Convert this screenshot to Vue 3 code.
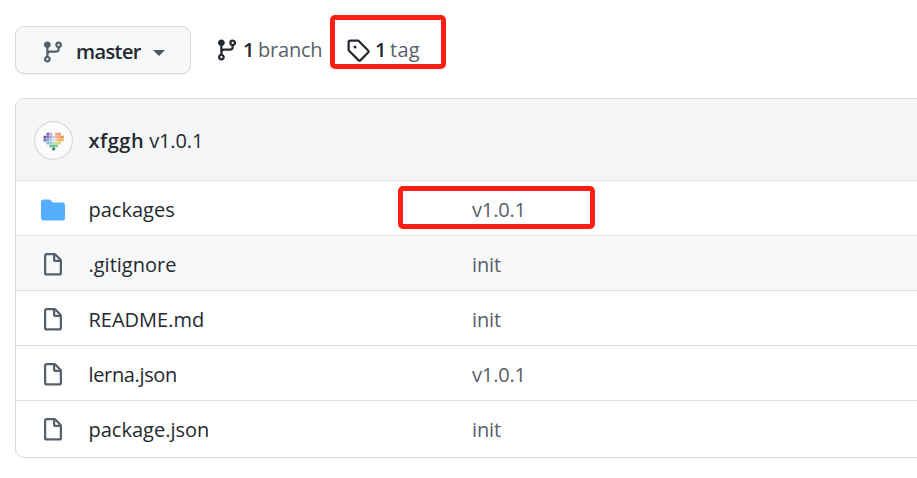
<script setup>
const branchPath = 'M11.75 2.5a.75.75 0 100 1.5.75.75 0 000-1.5zm-2.25.75a2.25 2.25 0 113 2.122V6A2.5 2.5 0 0110 8.5H6a1 1 0 00-1 1v1.128a2.251 2.251 0 11-1.5 0V5.372a2.25 2.25 0 111.5 0v1.836A2.492 2.492 0 016 7h4a1 1 0 001-1v-.628A2.25 2.25 0 019.5 3.25zM4.25 12a.75.75 0 100 1.5.75.75 0 000-1.5zM3.5 3.25a.75.75 0 111.5 0 .75.75 0 01-1.5 0z'
const tagPath = 'M2.5 7.775V2.75a.25.25 0 01.25-.25h5.025a.25.25 0 01.177.073l6.25 6.25a.25.25 0 010 .354l-5.025 5.025a.25.25 0 01-.354 0l-6.25-6.25a.25.25 0 01-.073-.177zm-1.5 0V2.75C1 1.784 1.784 1 2.75 1h5.025c.464 0 .91.184 1.238.513l6.25 6.25a1.75 1.75 0 010 2.474l-5.026 5.026a1.75 1.75 0 01-2.474 0l-6.25-6.25A1.75 1.75 0 011 7.775zM6 5a1 1 0 100 2 1 1 0 000-2z'
const filePath = 'M3.75 1.5a.25.25 0 00-.25.25v11.5c0 .138.112.25.25.25h8.5a.25.25 0 00.25-.25V6H9.75A1.75 1.75 0 018 4.25V1.5H3.75zm5.75.56v2.19c0 .138.112.25.25.25h2.19L9.5 2.06zM2 1.75C2 .784 2.784 0 3.75 0h5.086c.464 0 .909.184 1.237.513l3.414 3.414c.329.328.513.773.513 1.237v8.086A1.75 1.75 0 0112.25 15h-8.5A1.75 1.75 0 012 13.25V1.75z'
const folderPath = 'M1.75 1A1.75 1.75 0 000 2.75v10.5C0 14.216.784 15 1.75 15h12.5A1.75 1.75 0 0016 13.25v-8.5A1.75 1.75 0 0014.25 3h-6.5a.25.25 0 01-.2-.1l-.9-1.2c-.33-.44-.85-.7-1.4-.7h-3.5z'

const rows = [
  { name: 'packages', message: 'v1.0.1', folder: true, marked: true },
  { name: '.gitignore', message: 'init', shaded: true },
  { name: 'README.md', message: 'init' },
  { name: 'lerna.json', message: 'v1.0.1', tight: true },
  { name: 'package.json', message: 'init' },
]

// Avatar: heart made of coloured cells, [column, row, colour]
const heart = [
  [1, 0, '#76609f'], [2, 0, '#b3a6d0'], [4, 0, '#eda08c'], [5, 0, '#ef8c68'],
  [0, 1, '#6a4f9c'], [1, 1, '#7d6fb2'], [2, 1, '#a9a4d6'], [3, 1, '#dcc6e2'], [4, 1, '#f2ad9a'], [5, 1, '#f59f68'], [6, 1, '#ee9350'],
  [0, 2, '#6b74b5'], [1, 2, '#8b9fd0'], [2, 2, '#aecbe8'], [3, 2, '#dce4e8'], [4, 2, '#f6cda0'], [5, 2, '#f5b060'], [6, 2, '#efb468'],
  [1, 3, '#86b6d8'], [2, 3, '#8fcfdc'], [3, 3, '#b4dfc8'], [4, 3, '#d0dc8c'], [5, 3, '#ddcf6e'],
  [2, 4, '#62bba8'], [3, 4, '#6bbd8c'], [4, 4, '#8cc878'],
  [3, 5, '#238a63'],
]
</script>

<template>
  <main class="page">
    <div class="toolbar">
      <button class="branch-button">
        <svg class="icon muted" viewBox="0 0 16 16"><path :d="branchPath" /></svg>
        <span class="branch-name">master</span>
        <span class="caret"></span>
      </button>
      <a class="stat branches">
        <svg class="icon" viewBox="0 0 16 16"><path :d="branchPath" /></svg>
        <strong>1</strong><span class="label">branch</span>
      </a>
      <a class="stat tags">
        <svg class="icon" viewBox="0 0 16 16"><path fill-rule="evenodd" :d="tagPath" /></svg>
        <strong>1</strong><span class="label">tag</span>
      </a>
    </div>

    <section class="files">
      <header class="commit">
        <svg class="avatar" viewBox="0 0 39 39">
          <circle cx="19.5" cy="19.5" r="18.9" />
          <rect v-for="c in heart" :key="c[0] + '-' + c[1]" :x="9.6 + c[0] * 2.9" :y="11.8 + c[1] * 2.95" width="2.75" height="2.75" :fill="c[2]" />
        </svg>
        <strong class="author">xfggh</strong>
        <span class="title">v1.0.1</span>
      </header>
      <div v-for="row in rows" :key="row.name" class="row" :class="{ shaded: row.shaded }">
        <svg class="icon" :class="row.folder ? 'folder' : 'muted'" viewBox="0 0 16 16">
          <path fill-rule="evenodd" :d="row.folder ? folderPath : filePath" />
        </svg>
        <span class="name" :class="{ tight: row.tight }">{{ row.name }}</span>
        <span class="message" :class="{ marked: row.marked }">{{ row.message }}</span>
      </div>
    </section>
  </main>
</template>

<style>
body { background: #fff; }
</style>

<style scoped>
.page {
  box-sizing: border-box;
  width: 917px;
  height: 478px;
  padding: 15px 0 0 15px;
  overflow: hidden;
  font-family: "Segoe UI", "Open Sans", sans-serif;
  font-size: 20px;
  line-height: 30px;
  color: #24292f;
}
.toolbar { display: flex; align-items: flex-start; height: 83px; }
.branch-button {
  box-sizing: border-box;
  display: flex;
  align-items: center;
  width: 176px;
  height: 48px;
  margin-top: 11px;
  padding: 3px 24px 0 25px;
  border: 1px solid #d5d8dc;
  border-radius: 9px;
  background: #f6f8fa;
  box-shadow: 0 1px 1px rgba(27, 31, 36, 0.05);
  font: inherit;
  color: inherit;
}
.icon { flex: none; display: block; width: 24px; height: 24px; fill: #24292f; }
.icon.muted { fill: #57606a; }
.icon.folder { fill: #54aeff; }
.branch-name {
  flex: none;
  margin-left: 11px;
  width: 66px;
  font-weight: 600;
  letter-spacing: -0.6px;
  text-align: left;
}
.caret {
  flex: none;
  margin: 3px 0 0 11px;
  border: 6px solid transparent;
  border-top-color: #4d545c;
  border-bottom: 0;
}
.stat { display: flex; align-items: center; height: 54px; box-sizing: border-box; padding-top: 15px; }
.stat strong { width: 15px; font-weight: 600; margin-left: 4px; }
.stat .label { color: #57606a; letter-spacing: -0.2px; }
.branches { margin-left: 24px; width: 115px; }
.stat.tags {
  width: 116px;
  padding: 16px 0 0 11px;
  border: 5px solid #ff1f12;
  border-radius: 5px;
}
.tags strong { margin-left: 5px; }
.tags .label { letter-spacing: 0.3px; }
.files {
  box-sizing: border-box;
  width: 920px;
  height: 360px;
  border: 1px solid #d0d7de;
  border-radius: 9px;
  overflow: hidden;
}
.commit {
  box-sizing: border-box;
  display: flex;
  align-items: center;
  height: 81px;
  padding: 1px 0 0 17.5px;
  background: #f4f6f8;
}
.avatar { width: 39px; height: 39px; margin-right: 16px; }
.avatar circle { fill: #fbfcfc; stroke: #d5d8da; stroke-width: 1.2; }
.author { font-weight: 600; margin-right: 5px; padding-top: 2px; letter-spacing: 0.5px; }
.title { padding-top: 2px; letter-spacing: -0.1px; }
.row {
  box-sizing: border-box;
  display: flex;
  align-items: center;
  height: 55px;
  padding: 4px 0 0 25px;
  border-top: 1px solid #d8dee4;
}
.row.shaded { background: #f6f8fa; }
.name { margin-left: 23.5px; width: 309.5px; letter-spacing: 0; }
.name.tight { letter-spacing: -0.35px; }
.message {
  box-sizing: border-box;
  width: 197px;
  height: 43px;
  margin-top: -6px;
  padding-left: 74px;
  line-height: 47px;
  letter-spacing: -0.15px;
  color: #57606a;
}
.message.marked {
  border: 5px solid #ff1f12;
  border-radius: 5px;
  padding-left: 69px;
  line-height: 37px;
}
</style>
